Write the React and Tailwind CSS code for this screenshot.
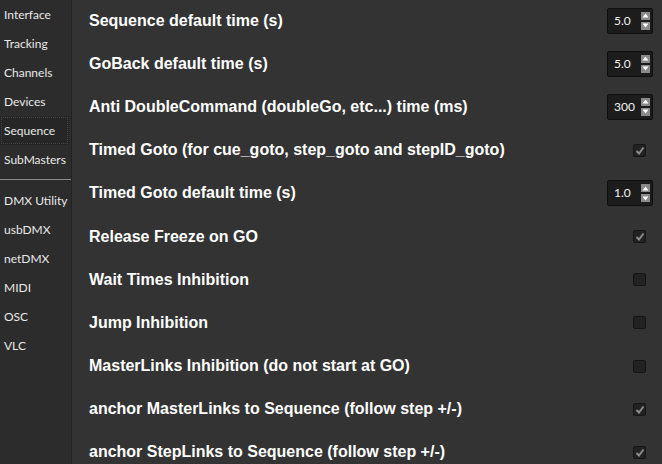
import React from "react";

const navTop = ["Interface", "Tracking", "Channels", "Devices", "Sequence", "SubMasters"];
const navBottom = ["DMX Utility", "usbDMX", "netDMX", "MIDI", "OSC", "VLC"];

const rows = [
  { label: "Sequence default time (s)", type: "spin", value: "5.0" },
  { label: "GoBack default time (s)", type: "spin", value: "5.0" },
  { label: "Anti DoubleCommand (doubleGo, etc...) time (ms)", type: "spin", value: "300" },
  { label: "Timed Goto (for cue_goto, step_goto and stepID_goto)", type: "check", checked: true },
  { label: "Timed Goto default time (s)", type: "spin", value: "1.0" },
  { label: "Release Freeze on GO", type: "check", checked: true },
  { label: "Wait Times Inhibition", type: "check", checked: false },
  { label: "Jump Inhibition", type: "check", checked: false },
  { label: "MasterLinks Inhibition (do not start at GO)", type: "check", checked: false },
  { label: "anchor MasterLinks to Sequence (follow step +/-)", type: "check", checked: true },
  { label: "anchor StepLinks to Sequence (follow step +/-)", type: "check", checked: true },
];

function NavItem({ label, selected }) {
  return (
    <div
      className={
        "h-[29px] shrink-0 flex items-center pl-[4px] text-[12px] text-[#e8e8e8] [font-family:Lato,sans-serif] " +
        (selected ? "bg-[#262626] outline outline-1 outline-dotted outline-[#444] -outline-offset-2 mr-[2px]" : "")
      }
    >
      {label}
    </div>
  );
}

function Spin({ value }) {
  return (
    <div className="w-[46px] h-[26px] bg-[#1c1c1c] border border-[#0e0e0e] rounded-[2px] flex items-center justify-between pl-[6px] pr-[2px]">
      <span className="text-[12px] text-[#f2f2f2] [font-family:Lato,sans-serif]">{value}</span>
      <div className="flex flex-col gap-[2px]">
        <div className="w-[9px] h-[8px] bg-[#8a8a8a] flex items-center justify-center">
          <svg width="7" height="5" viewBox="0 0 7 5"><path d="M3.5 0.5 L6.5 4.5 L0.5 4.5 Z" fill="#fff" /></svg>
        </div>
        <div className="w-[9px] h-[8px] bg-[#8a8a8a] flex items-center justify-center">
          <svg width="7" height="5" viewBox="0 0 7 5"><path d="M0.5 0.5 L6.5 0.5 L3.5 4.5 Z" fill="#fff" /></svg>
        </div>
      </div>
    </div>
  );
}

function Check({ checked }) {
  return (
    <div className="w-[13px] h-[13px] bg-[#222] border border-[#151515] rounded-[2px] flex items-center justify-center">
      {checked && (
        <svg width="10" height="9" viewBox="0 0 10 9">
          <path d="M1.5 5 L4 7.5 L8.5 1.5" stroke="#8c8c8c" strokeWidth="2" fill="none" />
        </svg>
      )}
    </div>
  );
}

export default function App() {
  return (
    <div className="w-[662px] h-[464px] flex bg-[#333333] overflow-hidden">
      <div className="w-[72px] shrink-0 bg-[#2c2c2c] border-r border-[#222] flex flex-col">
        {navTop.map((l) => (
          <NavItem key={l} label={l} selected={l === "Sequence"} />
        ))}
        <div className="h-[5px] shrink-0" />
        <div className="h-[1px] shrink-0 bg-[#8a8a8a]" />
        <div className="h-[6px] shrink-0" />
        {navBottom.map((l) => (
          <NavItem key={l} label={l} />
        ))}
      </div>
      <div className="flex-1 flex flex-col pl-[17px] pr-[9px] -mt-[1px]">
        {rows.map((r, i) => (
          <div key={i} className="h-[43.2px] shrink-0 flex items-center justify-between">
            <span className="text-[16px] font-bold text-white [font-family:Liberation_Sans,Arial,sans-serif]">
              {r.label}
            </span>
            {r.type === "spin" ? (
              <Spin value={r.value} />
            ) : (
              <div className="w-[46px] flex justify-end pr-[7px]">
                <Check checked={r.checked} />
              </div>
            )}
          </div>
        ))}
      </div>
    </div>
  );
}
